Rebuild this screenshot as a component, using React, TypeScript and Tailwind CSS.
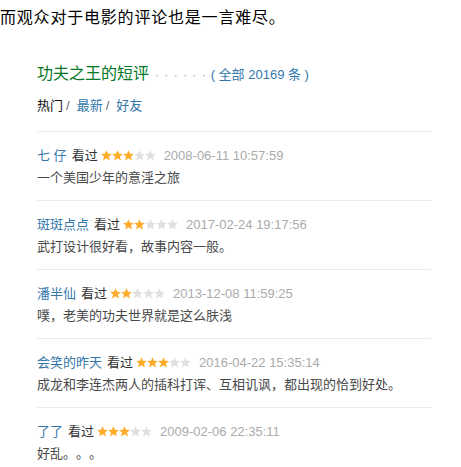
const REVIEWS = [
  { name: "七 仔", stars: 3, time: "2008-06-11 10:57:59", text: "一个美国少年的意淫之旅" },
  { name: "斑斑点点", stars: 2, time: "2017-02-24 19:17:56", text: "武打设计很好看，故事内容一般。" },
  { name: "潘半仙", stars: 2, time: "2013-12-08 11:59:25", text: "噗，老美的功夫世界就是这么肤浅" },
  { name: "会笑的昨天", stars: 3, time: "2016-04-22 15:35:14", text: "成龙和李连杰两人的插科打诨、互相讥讽，都出现的恰到好处。" },
  { name: "了了", stars: 3, time: "2009-02-06 22:35:11", text: "好乱。。。" },
];

const STAR = "M5.5 0.2 L7.1 3.7 L10.9 4 L8 6.5 L8.9 10.4 L5.5 8.3 L2.1 10.4 L3 6.5 L0.1 4 L3.9 3.7 Z";

function Stars({ n }: { n: number }) {
  return (
    <svg width="55" height="11" viewBox="0 0 55 11" className="mx-[3px] inline-block align-[-1px]">
      {[0, 1, 2, 3, 4].map((i) => (
        <path key={i} d={STAR} transform={`translate(${i * 11} 0)`} fill={i < n ? "#ffac2d" : "#e0e0e0"} />
      ))}
    </svg>
  );
}

export default function App() {
  return (
    <div className="min-h-screen bg-white font-['Liberation_Sans','Noto_Sans_CJK_SC',sans-serif] [text-spacing-trim:space-all]">
      <p className="pt-[7px] text-[16px] leading-[22px] tracking-[0.8px] text-black">而观众对于电影的评论也是一言难尽。</p>

      <div className="ml-[37px] w-[394px]">
        <h2 className="mt-[34px] flex items-baseline text-[16px] leading-[22px] text-[#072]">
          功夫之王的短评
          <span className="ml-[6px] text-[12px] tracking-[1px] text-[#aaa]">· · · · · ·</span>
          <span className="ml-[4px] text-[13px] text-[#37a]">( 全部 20169 条 )</span>
        </h2>

        <div className="mt-[9px] text-[13px] leading-[22px]">
          <span className="text-[#111]">热门</span>
          <span className="ml-[3px] text-[#666]">/</span>
          <span className="ml-[7px] text-[#37a]">最新</span>
          <span className="ml-[3px] text-[#666]">/</span>
          <span className="ml-[7px] text-[#37a]">好友</span>
        </div>

        <div className="mt-[14px]">
          {REVIEWS.map((r) => (
            <div key={r.time} className="border-t border-[#eaeaea] pt-[13px] pb-[11px] text-[13px] leading-[22px]">
              <div className="whitespace-nowrap">
                <span className="text-[#37a]">{r.name}</span>
                <span className="ml-[5px] text-[#333]">看过</span>
                <Stars n={r.stars} />
                <span className="ml-[5px] text-[#aaa]">{r.time}</span>
              </div>
              <p className="text-[#494949]">{r.text}</p>
            </div>
          ))}
        </div>
      </div>
    </div>
  );
}
